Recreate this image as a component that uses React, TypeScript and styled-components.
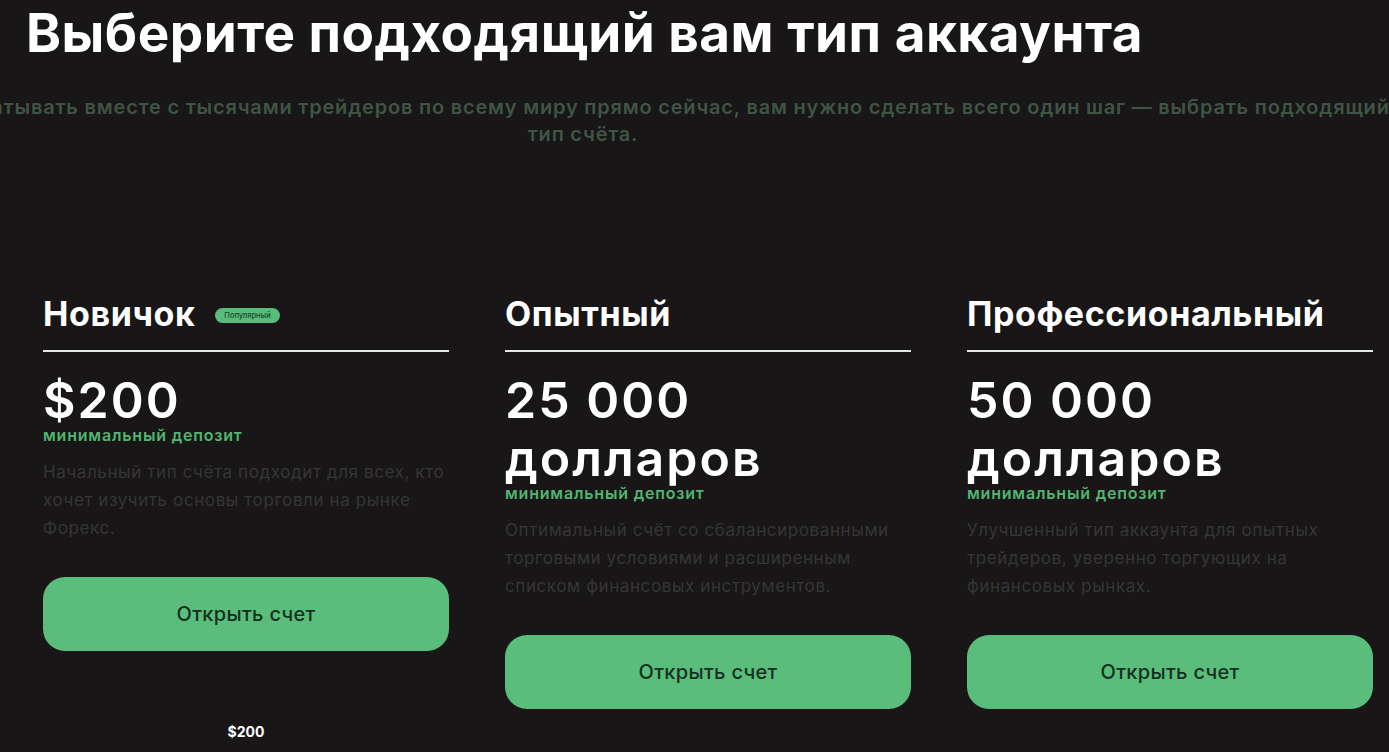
import React from "react";
import styled, { createGlobalStyle } from "styled-components";

const Global = createGlobalStyle`
  html, body { margin: 0; padding: 0; background: #181617; }
  body { font-family: Inter, "Noto Sans", sans-serif; overflow: hidden; }
  * { box-sizing: border-box; }
`;

const Page = styled.main`
  width: 1389px;
  height: 752px;
  overflow: hidden;
  background: #181617;
  display: flex;
  flex-direction: column;
`;

const Title = styled.h1`
  margin: 0;
  padding: 3px 0 0 26px;
  font-size: 53px;
  line-height: 60px;
  font-weight: 700;
  color: #ffffff;
  letter-spacing: 0.5px;
  white-space: nowrap;
`;

const Subtitle = styled.div`
  width: 1166px;
  margin-top: 31px;
  display: flex;
  flex-direction: column;
  align-items: center;
`;

const SubLine = styled.span`
  white-space: nowrap;
  font-size: 20px;
  line-height: 27px;
  font-weight: 600;
  letter-spacing: 0.8px;
  color: #3e5546;
`;

const Cards = styled.section`
  margin: 146px 0 0 43px;
  display: grid;
  grid-template-columns: repeat(3, 406px);
  column-gap: 56px;
  align-items: start;
`;

const Card = styled.article`
  display: flex;
  flex-direction: column;
`;

const CardHead = styled.div`
  display: flex;
  align-items: center;
  gap: 20px;
  height: 40px;
`;

const CardName = styled.h2`
  margin: 0;
  font-size: 34px;
  line-height: 40px;
  font-weight: 700;
  letter-spacing: 0.6px;
  color: #ffffff;
`;

const Badge = styled.span`
  display: inline-flex;
  align-items: center;
  height: 15px;
  padding: 0 9px;
  border-radius: 8px;
  background: #58bd7a;
  color: #1d4a2c;
  font-size: 7.5px;
  font-weight: 500;
  margin-top: 2px;
`;

const Divider = styled.hr`
  margin: 16px 0 0;
  border: 0;
  height: 2px;
  background: #e6e6e6;
`;

const Price = styled.div`
  margin-top: 19px;
  display: flex;
  flex-direction: column;
`;

const PriceLine = styled.span`
  font-size: 50px;
  line-height: 58px;
  font-weight: 600;
  letter-spacing: 2px;
  color: #ffffff;
  white-space: nowrap;
`;

const MinDeposit = styled.div`
  margin-top: -4px;
  font-size: 16px;
  line-height: 20px;
  font-weight: 600;
  letter-spacing: 0.8px;
  color: #52b570;
`;

const Desc = styled.p`
  margin: 13px 0 0;
  font-size: 17px;
  line-height: 28px;
  font-weight: 400;
  letter-spacing: 0.6px;
  color: #363536;
`;

const OpenButton = styled.button`
  margin-top: 35px;
  height: 74px;
  width: 100%;
  border: 0;
  border-radius: 22px;
  background: #5abd7b;
  color: #13301e;
  font-family: inherit;
  font-size: 20px;
  font-weight: 500;
  letter-spacing: 0.3px;
  cursor: pointer;
`;

const Footnote = styled.div`
  margin-top: 72px;
  text-align: center;
  font-size: 14px;
  font-weight: 700;
  color: #ffffff;
`;

type Plan = {
  name: string;
  popular?: boolean;
  price: string[];
  desc: string;
  footnote?: string;
};

const plans: Plan[] = [
  {
    name: "Новичок",
    popular: true,
    price: ["$200"],
    desc: "Начальный тип счёта подходит для всех, кто хочет изучить основы торговли на рынке Форекс.",
    footnote: "$200",
  },
  {
    name: "Опытный",
    price: ["25 000", "долларов"],
    desc: "Оптимальный счёт со сбалансированными торговыми условиями и расширенным списком финансовых инструментов.",
  },
  {
    name: "Профессиональный",
    price: ["50 000", "долларов"],
    desc: "Улучшенный тип аккаунта для опытных трейдеров, уверенно торгующих на финансовых рынках.",
  },
];

export default function App() {
  return (
    <>
      <Global />
      <Page>
        <Title>Выберите подходящий вам тип аккаунта</Title>
        <Subtitle>
          <SubLine>
            Чтобы начать зарабатывать вместе с тысячами трейдеров по всему миру прямо сейчас, вам нужно сделать всего один шаг — выбрать подходящий
          </SubLine>
          <SubLine>тип счёта.</SubLine>
        </Subtitle>
        <Cards>
          {plans.map((p) => (
            <Card key={p.name}>
              <CardHead>
                <CardName>{p.name}</CardName>
                {p.popular && <Badge>Популярный</Badge>}
              </CardHead>
              <Divider />
              <Price>
                {p.price.map((l) => (
                  <PriceLine key={l}>{l}</PriceLine>
                ))}
              </Price>
              <MinDeposit>минимальный депозит</MinDeposit>
              <Desc>{p.desc}</Desc>
              <OpenButton>Открыть счет</OpenButton>
              {p.footnote && <Footnote>{p.footnote}</Footnote>}
            </Card>
          ))}
        </Cards>
      </Page>
    </>
  );
}
